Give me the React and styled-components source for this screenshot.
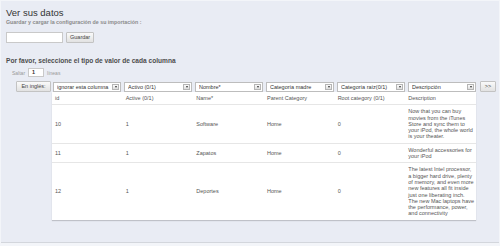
import React from 'react';
import styled, { createGlobalStyle } from 'styled-components';

const GlobalStyle = createGlobalStyle`
  html, body {
    margin: 0;
    padding: 0;
    background: #f3f5f9;
  }
  body {
    font-family: "Liberation Sans", Arial, sans-serif;
  }
`;

const Panel = styled.div`
  box-sizing: border-box;
  margin: 1px 1px 0 1px;
  height: 242px;
  padding: 5px 5px;
  background: #e9ecf4;
  border-bottom: 1px solid #d3d6dc;
`;

const Title = styled.h1`
  margin: 0;
  font-size: 9.5px;
  line-height: 13px;
  font-weight: normal;
  color: #333;
`;

const Subtitle = styled.div`
  font-size: 5.3px;
  line-height: 7px;
  font-weight: bold;
  color: #8a8a8a;
`;

const SaveRow = styled.div`
  display: flex;
  align-items: center;
  gap: 3px;
  margin-top: 6px;
`;

const TextInput = styled.div`
  box-sizing: border-box;
  width: ${p => p.$width}px;
  height: ${p => p.$height || 11}px;
  background: #fff;
  border: 1px solid #c9c9c9;
  font-size: 5.5px;
  font-weight: bold;
  line-height: ${p => (p.$height || 11) - 2}px;
  padding-left: 3px;
  color: #333;
`;

const Button = styled.div`
  box-sizing: border-box;
  height: 11px;
  width: ${p => (p.$width ? `${p.$width}px` : 'auto')};
  padding: 0 3px;
  border: 1px solid #c3c3c3;
  border-radius: 1px;
  background: linear-gradient(#fafafa, #e2e2e2);
  font-size: 5.5px;
  line-height: 9px;
  text-align: center;
  color: #444;
  flex-shrink: 0;
`;

const Heading = styled.h2`
  margin: 14px 0 0 0;
  font-size: 6.6px;
  line-height: 8px;
  font-weight: bold;
  color: #4d4d4d;
`;

const SkipRow = styled.div`
  display: flex;
  align-items: center;
  gap: 3px;
  margin: 3px 0 0 6px;
  font-size: 5px;
  color: #999;
`;

const Mapping = styled.div`
  display: flex;
  align-items: flex-start;
  margin: 4px 0 0 10px;
  gap: 1px;
`;

const Columns = styled.div`
  display: flex;
  flex-direction: column;
  width: 424px;
`;

const SelectRow = styled.div`
  display: grid;
  grid-template-columns: repeat(6, 1fr);
  gap: 3px;
  padding-left: 1px;
`;

const Select = styled.div`
  box-sizing: border-box;
  display: flex;
  align-items: center;
  height: 10px;
  margin-top: 1px;
  background: #fff;
  border: 1px solid #bdbdbd;
  font-size: 5.5px;
  color: #333;
  padding-left: 3px;
`;

const SelectLabel = styled.span`
  flex: 1;
  white-space: nowrap;
  overflow: hidden;
`;

const Arrow = styled.span`
  box-sizing: border-box;
  width: 7px;
  height: 6px;
  margin-right: 1px;
  border: 1px solid #b5b5b5;
  background: linear-gradient(#fbfbfb, #dedede);
  display: flex;
  align-items: center;
  justify-content: center;
  &::after {
    content: '';
    border-left: 1.5px solid transparent;
    border-right: 1.5px solid transparent;
    border-top: 2px solid #333;
  }
`;

const Table = styled.table`
  width: 424px;
  table-layout: fixed;
  border-collapse: collapse;
  background: #fff;
  box-shadow: 0 1px 1px rgba(0, 0, 0, 0.18);
  font-size: 5.5px;
  line-height: 6.3px;
  color: #555;
`;

const Cell = styled.td`
  padding: 3px 1px 3px 3px;
  vertical-align: middle;
  border-top: ${p => (p.$head ? 'none' : '1px solid #e6e6e6')};
`;

const Side = styled.div`
  margin-left: 3px;
`;

const selects = [
  'ignorar esta columna',
  'Activo (0/1)',
  'Nombre*',
  'Categoría madre',
  'Categoría raíz(0/1)',
  'Descripción',
];

const header = ['id', 'Active (0/1)', 'Name*', 'Parent Category', 'Root category (0/1)', 'Description'];

const rows = [
  ['10', '1', 'Software', 'Home', '0', 'Now that you can buy movies from the iTunes Store and sync them to your iPod, the whole world is your theater.'],
  ['11', '1', 'Zapatos', 'Home', '0', 'Wonderful accessories for your iPod'],
  ['12', '1', 'Deportes', 'Home', '0', 'The latest Intel processor, a bigger hard drive, plenty of memory, and even more new features all fit inside just one liberating inch. The new Mac laptops have the performance, power, and connectivity'],
];

export default function App() {
  return (
    <>
      <GlobalStyle />
      <Panel>
        <Title>Ver sus datos</Title>
        <Subtitle>Guardar y cargar la configuración de su importación :</Subtitle>
        <SaveRow>
          <TextInput $width={57} />
          <Button>Guardar</Button>
        </SaveRow>
        <Heading>Por favor, seleccione el tipo de valor de cada columna</Heading>
        <SkipRow>
          Saltar
          <TextInput $width={16} $height={9}>1</TextInput>
          líneas
        </SkipRow>
        <Mapping>
          <Button $width={35}>En inglés:</Button>
          <Columns>
            <SelectRow>
              {selects.map(s => (
                <Select key={s}>
                  <SelectLabel>{s}</SelectLabel>
                  <Arrow />
                </Select>
              ))}
            </SelectRow>
            <Table>
              <tbody>
                <tr>
                  {header.map(h => (
                    <Cell key={h} $head>{h}</Cell>
                  ))}
                </tr>
                {rows.map(r => (
                  <tr key={r[0]}>
                    {r.map((c, i) => (
                      <Cell key={i}>{c}</Cell>
                    ))}
                  </tr>
                ))}
              </tbody>
            </Table>
          </Columns>
          <Side>
            <Button $width={16}>&gt;&gt;</Button>
          </Side>
        </Mapping>
      </Panel>
    </>
  );
}
